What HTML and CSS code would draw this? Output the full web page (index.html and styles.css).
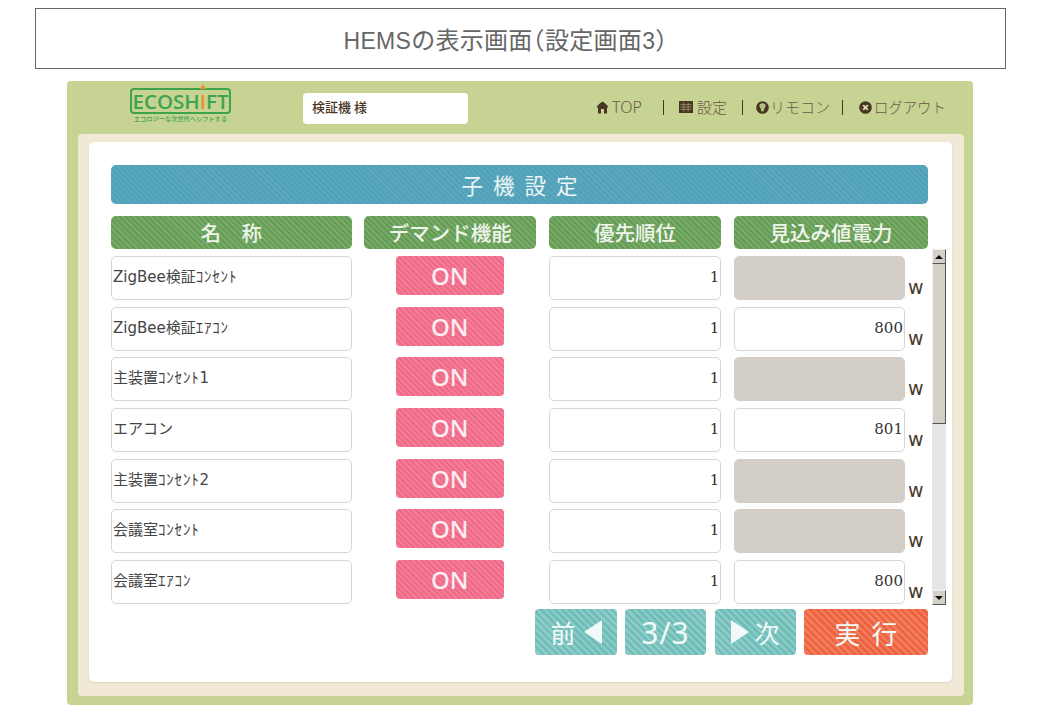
FILE: index.html
```html
<!DOCTYPE html>
<html lang="ja">
<head>
    <meta charset="UTF-8">
    <title>HEMSの表示画面</title>
    <link rel="stylesheet" href="styles.css">
</head>
<body>
    <h1 class="page-title"><span class="latin">HEMS</span>の表示画面（設定画面<span class="latin">3</span>）</h1>

    <div class="panel">
        <div class="topbar">
            <div class="logo">
                <div class="logo-box">ECOSH<span class="logo-i">I</span>FT</div>
                <div class="logo-sub">エコロジーな次世代へシフトする</div>
            </div>
            <div class="user">検証機 様</div>
            <div class="nav">
                <svg class="nav-icon icon-home" viewBox="0 0 13 13"><path d="M6.5 .5 C9 2 11.5 4 12.5 6.5 H11 V12.5 H8 V8 H5 V12.5 H2 V6.5 H.5 C1.500 4 4 2 6.500 .5 Z" fill="#4a3524"/></svg>
                <span class="nav-top">TOP</span>
                <i class="nav-sep sep-1"></i>
                <svg class="nav-icon icon-grid" viewBox="0 0 14 14"><path d="M0 1 H14 V13 H0 Z" fill="#4a3524"/><path d="M1.500 4.700 H12.500 M1.500 7 H12.500 M1.500 9.300 H12.500 M4.800 2.500 V11.500 M9.200 2.500 V11.500" stroke="#8d9168" stroke-width=".9"/></svg>
                <span class="nav-link">設定</span>
                <i class="nav-sep sep-2"></i>
                <svg class="nav-icon icon-remote" viewBox="0 0 14 14"><circle cx="7" cy="7" r="6.800" fill="#4a3524"/><path d="M3.600 5.500 a3.400 3 0 0 1 6.800 0 L8.600 9 V11 H5.400 V9 Z" fill="#b5bd84"/></svg>
                <span class="nav-link">リモコン</span>
                <i class="nav-sep sep-3"></i>
                <svg class="nav-icon icon-logout" viewBox="0 0 14 14"><circle cx="7" cy="7" r="6.800" fill="#4a3524"/><path d="M4.500 4.500 L9.500 9.500 M9.500 4.500 L4.500 9.500" stroke="#d6dfae" stroke-width="2"/></svg>
                <span class="nav-link nav-logout">ログアウト</span>
            </div>
        </div>

        <div class="cream">
            <div class="sheet">
                <div class="title-bar stripe-blue">子機設定</div>

                <div class="cols head-row">
                    <div class="col-head stripe-green">名　称</div>
                    <div class="col-head stripe-green">デマンド機能</div>
                    <div class="col-head stripe-green">優先順位</div>
                    <div class="col-head stripe-green">見込み値電力</div>
                </div>

                <div class="list-wrap">
                    <div class="list">
                        <div class="cols row">
                            <div class="field name">ZigBee検証<span class="kana">ｺﾝｾﾝﾄ</span></div>
                            <div class="on-cell"><div class="on-btn stripe-pink">ON</div></div>
                            <div class="field num">1</div>
                            <div class="value-cell"><div class="field num off"></div><span class="unit">w</span></div>
                        </div>
                        <div class="cols row">
                            <div class="field name">ZigBee検証<span class="kana">ｴｱｺﾝ</span></div>
                            <div class="on-cell"><div class="on-btn stripe-pink">ON</div></div>
                            <div class="field num">1</div>
                            <div class="value-cell"><div class="field num">800</div><span class="unit">w</span></div>
                        </div>
                        <div class="cols row">
                            <div class="field name">主装置<span class="kana">ｺﾝｾﾝﾄ</span>1</div>
                            <div class="on-cell"><div class="on-btn stripe-pink">ON</div></div>
                            <div class="field num">1</div>
                            <div class="value-cell"><div class="field num off"></div><span class="unit">w</span></div>
                        </div>
                        <div class="cols row">
                            <div class="field name">エアコン</div>
                            <div class="on-cell"><div class="on-btn stripe-pink">ON</div></div>
                            <div class="field num">1</div>
                            <div class="value-cell"><div class="field num">801</div><span class="unit">w</span></div>
                        </div>
                        <div class="cols row">
                            <div class="field name">主装置<span class="kana">ｺﾝｾﾝﾄ</span>2</div>
                            <div class="on-cell"><div class="on-btn stripe-pink">ON</div></div>
                            <div class="field num">1</div>
                            <div class="value-cell"><div class="field num off"></div><span class="unit">w</span></div>
                        </div>
                        <div class="cols row">
                            <div class="field name">会議室<span class="kana">ｺﾝｾﾝﾄ</span></div>
                            <div class="on-cell"><div class="on-btn stripe-pink">ON</div></div>
                            <div class="field num">1</div>
                            <div class="value-cell"><div class="field num off"></div><span class="unit">w</span></div>
                        </div>
                        <div class="cols row">
                            <div class="field name">会議室<span class="kana">ｴｱｺﾝ</span></div>
                            <div class="on-cell"><div class="on-btn stripe-pink">ON</div></div>
                            <div class="field num">1</div>
                            <div class="value-cell"><div class="field num">800</div><span class="unit">w</span></div>
                        </div>
                    </div>

                    <div class="scrollbar">
                        <div class="sb-btn"><i class="arrow-up"></i></div>
                        <div class="sb-thumb"></div>
                        <div class="sb-track"></div>
                        <div class="sb-btn"><i class="arrow-down"></i></div>
                    </div>
                </div>

                <div class="pager">
                    <div class="pg-btn stripe-teal btn-prev">前<i class="tri-left"></i></div>
                    <div class="pg-btn stripe-teal btn-page">3/3</div>
                    <div class="pg-btn stripe-teal btn-next"><i class="tri-right"></i>次</div>
                    <div class="pg-btn stripe-orange btn-run">実行</div>
                </div>
            </div>
        </div>
    </div>
</body>
</html>
```

FILE: styles.css
```css
body{
    margin: 0;
    background: #fff;
    font-family: "Noto Sans CJK JP", "Noto Sans", sans-serif;
}

.page-title{
    box-sizing: border-box;
    width: 971px;
    height: 61px;
    margin: 8px 0 12px 35px;
    padding-right: 30px;
    border: 1px solid #666;
    font-family: "Noto Sans CJK JP", sans-serif;
    font-size: 24px;
    font-weight: normal;
    font-feature-settings: "halt";
    letter-spacing: .3px;
    line-height: 60px;
    text-align: center;
    color: #666;
}
.latin{
    font-family: "Liberation Sans", sans-serif;
    font-size: 23px;
}

.panel{
    box-sizing: border-box;
    width: 906px;
    height: 624px;
    margin-left: 67px;
    background: #c6d392;
    border-radius: 4px;
}

/* top bar */
.topbar{
    display: flex;
    height: 53px;
}
.logo{
    width: 101px;
    margin: 7px 0 0 63px;
    text-align: center;
}
.logo-box{
    box-sizing: border-box;
    height: 26px;
    border: 2px solid #3da34f;
    border-radius: 4px;
    font-family: "Open Sans", sans-serif;
    font-size: 20.5px;
    font-weight: 600;
    line-height: 22px;
    color: #3da34f;
    white-space: nowrap;
}
.logo-i{
    position: relative;
    color: #e8932c;
}
.logo-i::before{
    content: "";
    position: absolute;
    left: 50%;
    top: -3px;
    margin-left: -3px;
    border: 3px solid transparent;
    border-top: 0;
    border-bottom: 5px solid #e8932c;
}
.logo-sub{
    margin-top: 1px;
    font-size: 6.2px;
    font-weight: 500;
    line-height: 8px;
    color: #3da34f;
    white-space: nowrap;
}
.user{
    box-sizing: border-box;
    width: 165px;
    height: 31px;
    margin: 12px 0 0 72px;
    padding-left: 9px;
    background: #fff;
    border-radius: 4px;
    font-size: 13px;
    font-weight: 500;
    line-height: 27px;
    color: #4a3524;
}
.nav{
    display: flex;
    align-items: center;
    height: 16px;
    margin: 18px 0 0 128px;
    color: #6a5a48;
    font-size: 15px;
    font-weight: 300;
    line-height: 16px;
    white-space: nowrap;
}
.nav-icon{
    height: 13px;
    flex: none;
}
.icon-home{
    width: 13px;
    margin-right: 3px;
}
.icon-grid{
    width: 14px;
    height: 14px;
    margin-right: 4px;
}
.icon-remote{
    width: 13px;
    margin-right: 1px;
}
.icon-logout{
    width: 13px;
    margin-right: 2px;
}
.nav-top{
    font-family: "Noto Sans", sans-serif;
    font-size: 16px;
}
.nav-logout{
    font-size: 14.4px;
}
.nav-sep{
    width: 1px;
    height: 15px;
    background: #4a3524;
}
.sep-1{ margin: 0 15px 0 21px; }
.sep-2{ margin: 0 13px 0 15px; }
.sep-3{ margin: 0 16px 0 12px; }

/* main sheet */
.cream{
    box-sizing: border-box;
    height: 562px;
    margin: 0 9px 0 11px;
    padding: 8px 12px 14px 11px;
    background: #f1e9d6;
    border-radius: 4px;
}
.sheet{
    box-sizing: border-box;
    height: 540px;
    padding: 23px 24px 0 22px;
    background: #fff;
    border-radius: 5px;
    box-shadow: 0 1px 2px #d8d2c0;
}

.stripe-blue{ background: repeating-linear-gradient(45deg, #50a2bb 0 2px, #5ba8be 2px 4px); }
.stripe-green{ background: repeating-linear-gradient(45deg, #659c55 0 2px, #78ab68 2px 4px); }
.stripe-pink{ background: repeating-linear-gradient(45deg, #f0698a 0 2px, #f37d95 2px 4px); }
.stripe-teal{ background: repeating-linear-gradient(45deg, #6fbdb8 0 2.5px, #8ccbc6 2.5px 5px); }
.stripe-orange{ background: repeating-linear-gradient(45deg, #ed6340 0 2.5px, #f27c5c 2.5px 5px); }

.title-bar{
    height: 39px;
    margin-bottom: 12px;
    border-radius: 5px;
    font-size: 21.5px;
    line-height: 39px;
    letter-spacing: 10px;
    text-indent: 10px;
    text-align: center;
    color: #eef5f5;
}

.cols{
    display: grid;
    grid-template-columns: 240.5px 172px 172.5px 194px;
    column-gap: 12.67px;
}
.head-row{
    margin-bottom: 7px;
}
.col-head{
    height: 33px;
    border-radius: 5px;
    font-size: 20.5px;
    font-weight: 500;
    line-height: 33px;
    text-align: center;
    color: #f0f5ec;
}

.list-wrap{
    display: flex;
    margin-right: -18px;
}
.list{
    display: flex;
    flex-direction: column;
    gap: 6.67px;
    width: 817px;
}
.row{
    height: 44px;
}
.field{
    box-sizing: border-box;
    height: 44px;
    border: 1px solid #d6d6d6;
    border-radius: 5px;
    background: #fff;
    color: #333;
    white-space: nowrap;
}
.name{
    padding-left: 1px;
    font-family: "DejaVu Sans", "Noto Sans CJK JP", sans-serif;
    font-size: 15px;
    line-height: 41px;
    color: #444;
}
.kana{
    letter-spacing: .8px;
}
.num{
    padding-right: 1px;
    font-family: "DejaVu Serif", serif;
    font-size: 15px;
    line-height: 40px;
    text-align: right;
}
.off{
    background: #d3cfc8;
    border-color: #d3cfc8;
}
.on-cell{
    display: flex;
    justify-content: center;
    padding-right: 1px;
}
.on-btn{
    width: 108px;
    height: 39px;
    border-radius: 4px;
    font-family: "Noto Sans", sans-serif;
    font-size: 24px;
    font-weight: 500;
    line-height: 39px;
    text-align: center;
    color: #fdeef1;
}
.value-cell{
    display: flex;
}
.value-cell .field{
    width: 171px;
}
.unit{
    margin: 19px 0 0 3px;
    font-family: "DejaVu Sans", sans-serif;
    font-size: 19px;
    line-height: 24px;
    color: #4a3a2c;
}

/* scrollbar */
.scrollbar{
    display: flex;
    flex-direction: column;
    flex: none;
    width: 14px;
    height: 356px;
    margin: -7px 0 0 4px;
    background: #e6e6e6;
}
.sb-btn{
    display: flex;
    align-items: center;
    justify-content: center;
    box-sizing: border-box;
    height: 15px;
    background: #d4d0c8;
    border: 1px solid;
    border-color: #f2f0ea #555 #555 #f2f0ea;
}
.arrow-up{
    border: 4px solid transparent;
    border-top: 0;
    border-bottom: 4px solid #111;
}
.arrow-down{
    border: 4px solid transparent;
    border-bottom: 0;
    border-top: 4px solid #111;
}
.sb-thumb{
    box-sizing: border-box;
    height: 160px;
    background: #d4d0c8;
    border-right: 1px solid #555;
    border-bottom: 1px solid #555;
    border-left: 1px solid #f2f0ea;
}
.sb-track{
    flex: 1;
}

/* bottom buttons */
.pager{
    display: flex;
    justify-content: flex-end;
    margin-top: 4px;
}
.pg-btn{
    display: flex;
    align-items: center;
    justify-content: center;
    height: 46px;
    border-radius: 4px;
    color: #f2faf9;
}
.btn-prev{
    width: 82px;
    gap: 8px;
    font-size: 25px;
}
.btn-next{
    width: 81px;
    gap: 5px;
    margin-right: 8px;
    font-size: 25px;
}
.btn-page{
    width: 81px;
    margin: 0 9px 0 8px;
    font-family: "Noto Sans", sans-serif;
    font-size: 30px;
    letter-spacing: 1px;
}
.btn-run{
    width: 124px;
    font-size: 26px;
    letter-spacing: 11px;
    text-indent: 11px;
}
.tri-left{
    border-top: 12px solid transparent;
    border-bottom: 12px solid transparent;
    border-right: 18px solid #f2faf9;
}
.tri-right{
    border-top: 12px solid transparent;
    border-bottom: 12px solid transparent;
    border-left: 18px solid #f2faf9;
}
```
